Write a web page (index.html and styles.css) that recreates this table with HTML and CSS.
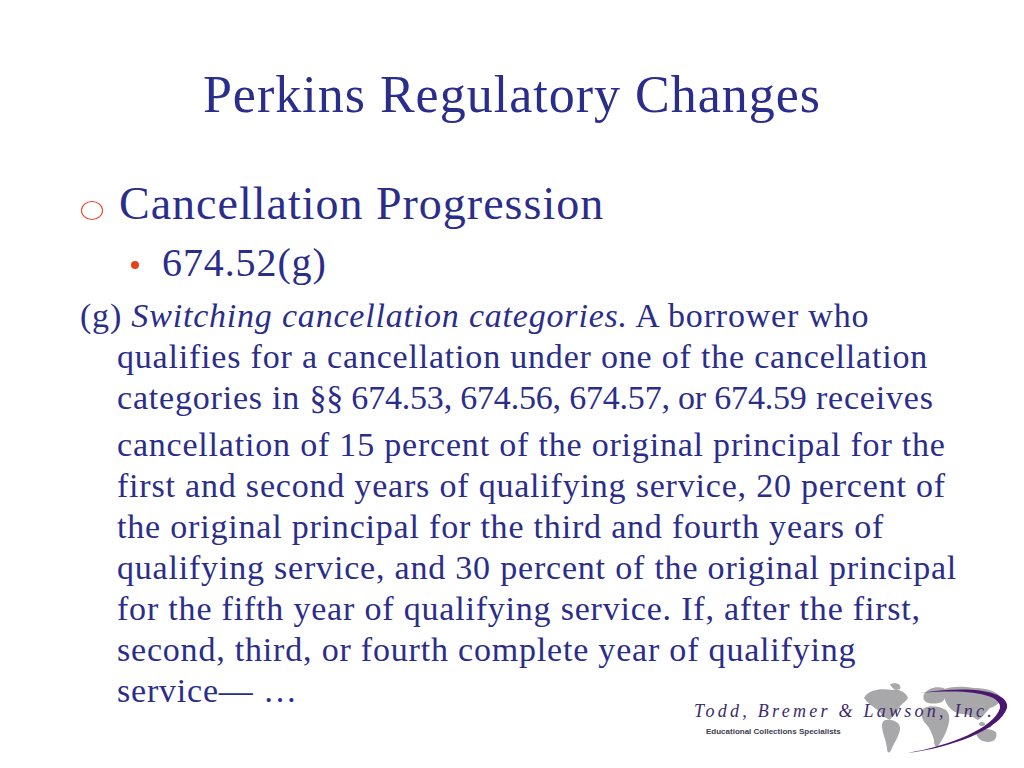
FILE: index.html
```html
<!DOCTYPE html>
<html>
<head>
<meta charset="utf-8">
<link rel="stylesheet" href="styles.css">
</head>
<body>
<div class="slide">
  <h1 class="title">Perkins Regulatory Changes</h1>
  <div class="content">
    <div class="lvl1"><span class="ring"></span><span>Cancellation Progression</span></div>
    <div class="lvl2"><span class="dot"></span><span>674.52(g)</span></div>
    <p class="para">(g) <em>Switching cancellation categories.</em> A borrower who<br>qualifies for a cancellation under one of the cancellation<br>categories in <span class="num">§§ 674.53, 674.56, 674.57, or 674.59</span> receives</p>
    <p class="para cont">cancellation of 15 percent of the original principal for the<br>first and second years of qualifying service, 20 percent of<br>the original principal for the third and fourth years of<br>qualifying service, and 30 percent of the original principal<br>for the fifth year of qualifying service. If, after the first,<br>second, third, or fourth complete year of qualifying<br>service— …</p>
  </div>
  <div class="logo">
    <svg class="mark" width="160" height="80" viewBox="0 0 160 80">
      <g fill="#a8a8ab">
        <path d="M14 18 C18 10 30 8 42 10 C48 8 56 12 58 18 C56 22 50 24 48 30 C46 34 42 36 40 40 C36 38 32 36 30 32 C26 28 20 26 14 18 Z"/>
        <path d="M40 4 C46 2 52 4 50 9 C46 11 42 9 40 4 Z"/>
        <path d="M36 40 C42 39 50 42 50 48 C50 54 46 60 42 68 C40 74 37 74 37 68 C36 60 32 52 32 46 C32 42 34 40 36 40 Z"/>
        <path d="M74 14 C78 8 86 6 94 8 C98 12 96 18 92 22 C86 24 80 24 76 22 C73 20 73 17 74 14 Z"/>
        <path d="M74 28 C80 25 90 26 96 30 C100 34 100 40 98 46 C96 54 92 60 88 66 C86 68 84 66 84 60 C82 54 80 48 76 44 C72 40 70 34 74 28 Z"/>
        <path d="M92 10 C100 6 112 6 124 8 C134 8 144 10 150 16 C152 22 146 26 140 28 C136 32 132 38 128 40 C124 38 120 34 114 34 C108 34 104 32 100 28 C96 24 94 18 92 10 Z"/>
        <ellipse cx="132" cy="44" rx="3" ry="2"/>
        <ellipse cx="139" cy="46" rx="2.5" ry="1.6"/>
        <path d="M126 52 C132 48 140 48 146 52 C148 58 144 62 138 62 C132 62 126 58 126 52 Z"/>
      </g>
      <path d="M57 73 C100 68 150 50 157 28 C160 14 130 4 70 13 C125 8 152 16 150 28 C144 48 100 66 57 73 Z" fill="#4a1670"/>
    </svg>
    <div class="logo-name">Todd, Bremer &amp; Lawson, Inc.</div>
    <div class="logo-tag">Educational Collections Specialists</div>
  </div>
</div>
</body>
</html>
```
FILE: styles.css
```css
html, body {
  margin: 0;
  padding: 0;
  background: #ffffff;
}
.slide {
  position: relative;
  width: 1024px;
  height: 768px;
  overflow: hidden;
  font-family: "Liberation Serif", "Times New Roman", serif;
  color: #2b2d8a;
}
.title {
  margin: 0;
  padding-top: 67px;
  text-align: center;
  font-weight: normal;
  font-size: 52px;
  line-height: 56px;
  letter-spacing: 1px;
}
.content {
  padding: 56px 0 0 80px;
}
.lvl1 {
  display: flex;
  align-items: center;
  font-size: 46px;
  line-height: 50px;
  letter-spacing: 1px;
}
.ring {
  box-sizing: border-box;
  width: 22px;
  height: 19px;
  border: 1.6px solid #e8401c;
  border-radius: 50%;
  margin: 12px 16px 0 1px;
}
.lvl2 {
  display: flex;
  align-items: center;
  font-size: 40px;
  line-height: 64px;
  letter-spacing: 0.9px;
  padding: 2px 0 0 51px;
}
.dot {
  width: 8px;
  height: 8px;
  border-radius: 50%;
  background: #e8401c;
  margin: 4px 23px 0 0;
}
.para {
  margin: 0;
  font-size: 34px;
  line-height: 41px;
  letter-spacing: 0.8px;
  padding-left: 37px;
  text-indent: -37px;
}
.para em {
  font-style: italic;
}
.para .num {
  letter-spacing: -0.2px;
}
.para.cont {
  margin-top: 6px;
  text-indent: 0;
}
.logo {
  position: absolute;
  left: 690px;
  top: 682px;
  width: 330px;
  height: 80px;
}
.mark {
  position: absolute;
  left: 160px;
  top: -2px;
}
.logo-name {
  position: relative;
  margin: 18px 0 0 4px;
  font-family: "Liberation Serif", serif;
  font-style: italic;
  font-size: 18px;
  line-height: 22px;
  letter-spacing: 3.25px;
  color: #3d2a6e;
  white-space: nowrap;
}
.logo-tag {
  position: relative;
  margin: 5px 0 0 16px;
  font-family: "Liberation Sans", Arial, sans-serif;
  font-weight: bold;
  font-size: 8px;
  line-height: 10px;
  color: #3c3c50;
  white-space: nowrap;
}
```
